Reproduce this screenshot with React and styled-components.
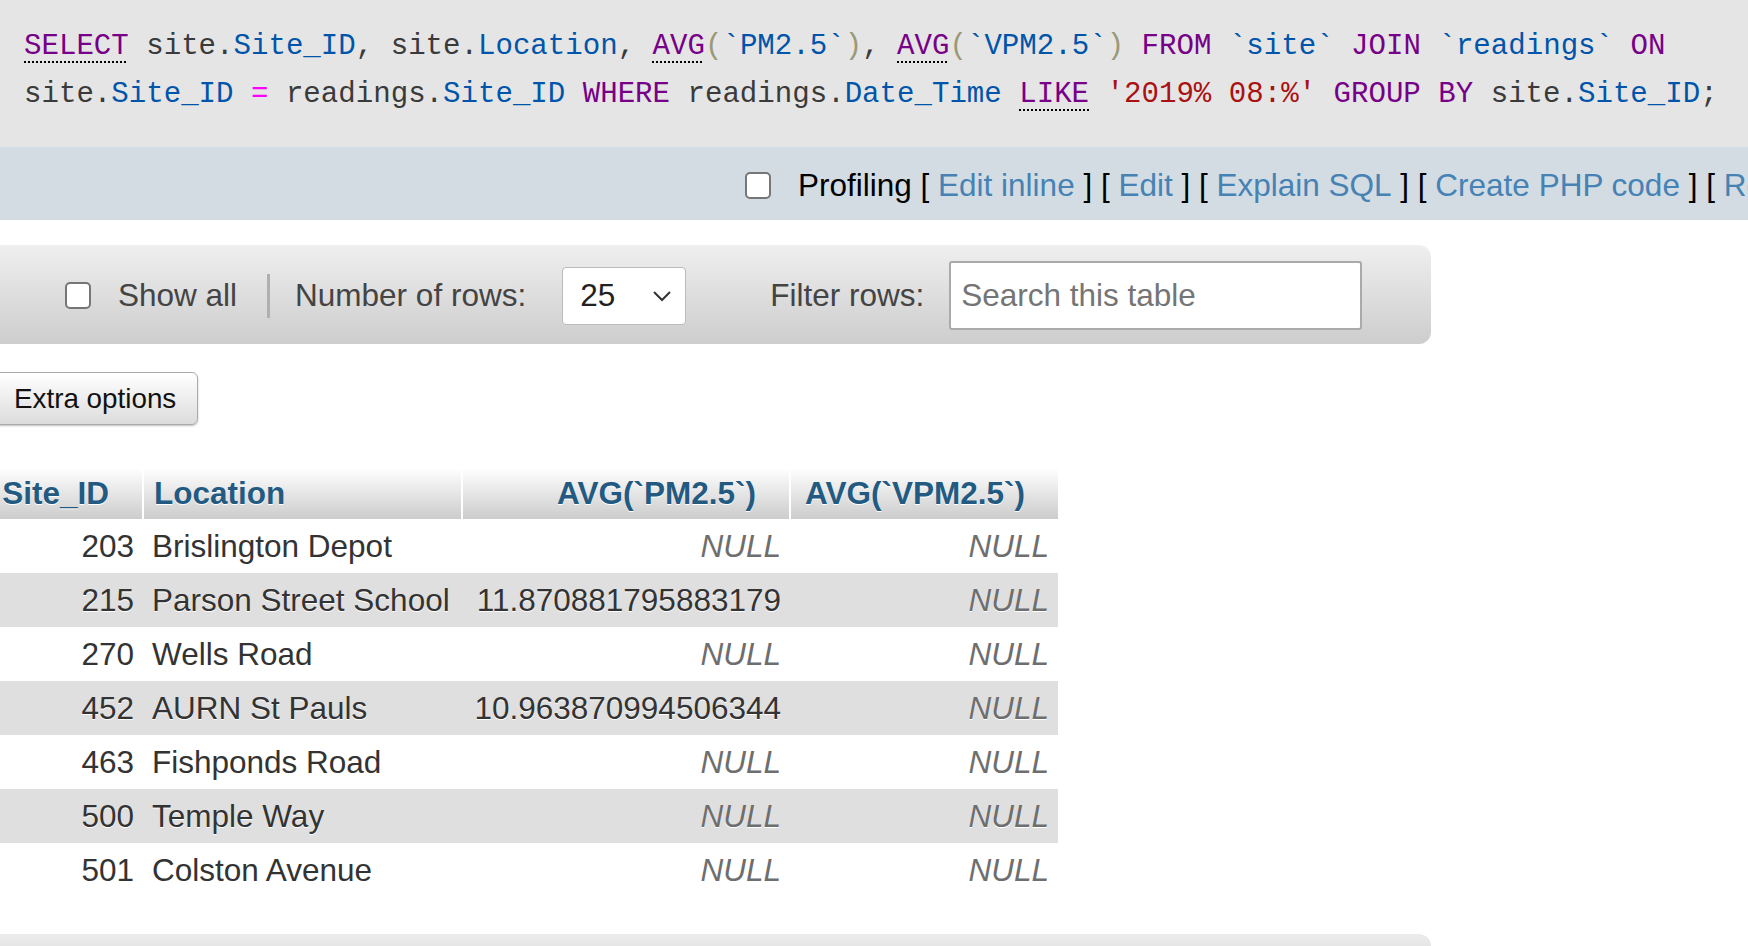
import React from 'react';
import styled, { createGlobalStyle } from 'styled-components';

const GlobalStyle = createGlobalStyle`
  html, body {
    margin: 0;
    padding: 0;
    background: #fff;
    font-family: "Liberation Sans", Arial, sans-serif;
    font-size: 31.5px;
    color: #333;
    overflow: hidden;
  }
`;

// sql query box
const SqlBox = styled.div`
  background: #e5e5e5;
  padding: 23px 24px 28px;
  font-family: "Liberation Mono", "Courier New", monospace;
  font-size: 29.1px;
  line-height: 48px;
  color: #3a3a3a;
  white-space: nowrap;
`;

const Tok = styled.span`
  color: ${p => p.$c || 'inherit'};
  ${p => p.$doc && `
    text-decoration: underline dotted #000;
    text-decoration-thickness: 2px;
    text-underline-offset: 7px;
  `}
`;

const ProfilingBar = styled.div`
  background: #d3dce3;
  height: 73px;
  box-sizing: border-box;
  padding-top: 3px;
  display: flex;
  align-items: center;
  padding-left: 745px;
  overflow: hidden;
  white-space: nowrap;
  color: #000;
`;

const Check = styled.span`
  display: inline-block;
  flex: none;
  width: 22px;
  height: 23px;
  border: 2px solid #767676;
  border-radius: 5px;
  background: #fff;
  margin-right: ${p => p.$gap || 27}px;
`;

const Link = styled.a`
  color: #4682b4;
  text-decoration: none;
`;

const Toolbar = styled.div`
  margin-top: 25px;
  width: 1431px;
  height: 99px;
  box-sizing: border-box;
  border-radius: 0 12px 12px 0;
  background: linear-gradient(#efefef, #cdcdcd);
  display: flex;
  align-items: center;
  padding: 2px 0 0 65px;
  color: #444;
  white-space: nowrap;
`;

const Label = styled.span`
  margin-right: ${p => p.$mr || 0}px;
`;

const Sep = styled.span`
  width: 3px;
  height: 44px;
  background: #b0b0b0;
  margin: 0 25px 0 30px;
`;

const Select = styled.div`
  width: 124px;
  height: 58px;
  box-sizing: border-box;
  background: #fff;
  border: 1px solid #bbb;
  border-radius: 4px;
  display: flex;
  align-items: center;
  justify-content: space-between;
  padding: 0 13px 0 17px;
  color: #222;
  margin-right: 84px;
`;

const SearchBox = styled.div`
  width: 413px;
  height: 69px;
  box-sizing: border-box;
  background: #fff;
  border: 2px solid #aaa;
  border-radius: 3px;
  display: flex;
  align-items: center;
  padding-left: 10px;
  color: #757575;
`;

const Button = styled.div`
  margin: 28px 0 0 -8px;
  display: inline-flex;
  align-items: center;
  height: 53px;
  box-sizing: border-box;
  padding: 0 21px 0 21px;
  font-size: 27.8px;
  color: #111;
  background: linear-gradient(#ffffff, #dcdcdc);
  border: 1px solid #aaa;
  border-radius: 6px;
  box-shadow: 0 1px 2px rgba(0, 0, 0, 0.25);
`;

const Table = styled.table`
  margin-top: 43px;
  border-collapse: collapse;
  table-layout: fixed;
  width: 1058px;
`;

const Th = styled.th`
  height: 51px;
  padding: 0 ${p => (p.$left ? 0 : 33)}px 0 ${p => (p.$left ? 10 : 0)}px;
  text-align: ${p => (p.$left ? 'left' : 'right')};
  font-weight: bold;
  color: #235a81;
  text-shadow: 0 1px 0 #fff;
  background: linear-gradient(#ffffff, #cccccc);
  border-left: 2px solid #fff;
  white-space: nowrap;
  &:first-child {
    border-left: none;
  }
`;

const Tr = styled.tr`
  background: ${p => (p.$odd ? '#dfdfdf' : '#fff')};
`;

const Td = styled.td`
  height: 54px;
  padding: 0 ${p => (p.$left ? 0 : 9)}px 0 ${p => (p.$left ? 9 : 0)}px;
  text-align: ${p => (p.$left ? 'left' : 'right')};
  color: ${p => (p.$null ? '#6e6e6e' : '#333')};
  font-style: ${p => (p.$null ? 'italic' : 'normal')};
  text-shadow: 0 1px 0 #fff;
  white-space: nowrap;
`;

const BottomBar = styled.div`
  margin-top: 37px;
  width: 1431px;
  height: 60px;
  border-radius: 0 12px 0 0;
  background: linear-gradient(#ececec, #cdcdcd);
`;

const K = '#770088';
const V = '#0055aa';
const B = '#999977';

const rows = [
  ['203', 'Brislington Depot', null, null],
  ['215', 'Parson Street School', '11.870881795883179', null],
  ['270', 'Wells Road', null, null],
  ['452', 'AURN St Pauls', '10.963870994506344', null],
  ['463', 'Fishponds Road', null, null],
  ['500', 'Temple Way', null, null],
  ['501', 'Colston Avenue', null, null],
];

function Chevron() {
  return (
    <svg width="20" height="12" viewBox="0 0 20 12">
      <path d="M2 2 L10 10 L18 2" fill="none" stroke="#333" strokeWidth="2" />
    </svg>
  );
}

export default function App() {
  return (
    <>
      <GlobalStyle />
      <SqlBox>
        <div>
          <Tok $c={K} $doc>SELECT</Tok> site.<Tok $c={V}>Site_ID</Tok>, site.<Tok $c={V}>Location</Tok>,{' '}
          <Tok $c={K} $doc>AVG</Tok><Tok $c={B}>(</Tok><Tok $c={V}>`PM2.5`</Tok><Tok $c={B}>)</Tok>,{' '}
          <Tok $c={K} $doc>AVG</Tok><Tok $c={B}>(</Tok><Tok $c={V}>`VPM2.5`</Tok><Tok $c={B}>)</Tok>{' '}
          <Tok $c={K}>FROM</Tok> <Tok $c={V}>`site`</Tok> <Tok $c={K}>JOIN</Tok>{' '}
          <Tok $c={V}>`readings`</Tok> <Tok $c={K}>ON</Tok>
        </div>
        <div>
          site.<Tok $c={V}>Site_ID</Tok> <Tok $c="#ff00ff">=</Tok> readings.<Tok $c={V}>Site_ID</Tok>{' '}
          <Tok $c={K}>WHERE</Tok> readings.<Tok $c={V}>Date_Time</Tok> <Tok $c={K} $doc>LIKE</Tok>{' '}
          <Tok $c="#aa1111">'2019% 08:%'</Tok> <Tok $c={K}>GROUP BY</Tok> site.<Tok $c={V}>Site_ID</Tok>;
        </div>
      </SqlBox>

      <ProfilingBar>
        <Check />
        Profiling&nbsp;[&nbsp;<Link>Edit inline</Link>&nbsp;]&nbsp;[&nbsp;<Link>Edit</Link>&nbsp;]&nbsp;[&nbsp;
        <Link>Explain SQL</Link>&nbsp;]&nbsp;[&nbsp;<Link>Create PHP code</Link>&nbsp;]&nbsp;[&nbsp;
        <Link>Refresh</Link>&nbsp;]
      </ProfilingBar>

      <Toolbar>
        <Check />
        <Label>Show all</Label>
        <Sep />
        <Label $mr={36}>Number of rows:</Label>
        <Select>
          <span>25</span>
          <Chevron />
        </Select>
        <Label $mr={25}>Filter rows:</Label>
        <SearchBox>Search this table</SearchBox>
      </Toolbar>

      <Button>Extra options</Button>

      <Table>
        <colgroup>
          <col style={{ width: 143 }} />
          <col style={{ width: 319 }} />
          <col style={{ width: 328 }} />
          <col style={{ width: 268 }} />
        </colgroup>
        <thead>
          <tr>
            <Th>Site_ID</Th>
            <Th $left>Location</Th>
            <Th>AVG(`PM2.5`)</Th>
            <Th>AVG(`VPM2.5`)</Th>
          </tr>
        </thead>
        <tbody>
          {rows.map((r, i) => (
            <Tr key={r[0]} $odd={i % 2 === 1}>
              <Td>{r[0]}</Td>
              <Td $left>{r[1]}</Td>
              <Td $null={!r[2]}>{r[2] || 'NULL'}</Td>
              <Td $null={!r[3]}>{r[3] || 'NULL'}</Td>
            </Tr>
          ))}
        </tbody>
      </Table>

      <BottomBar />
    </>
  );
}
